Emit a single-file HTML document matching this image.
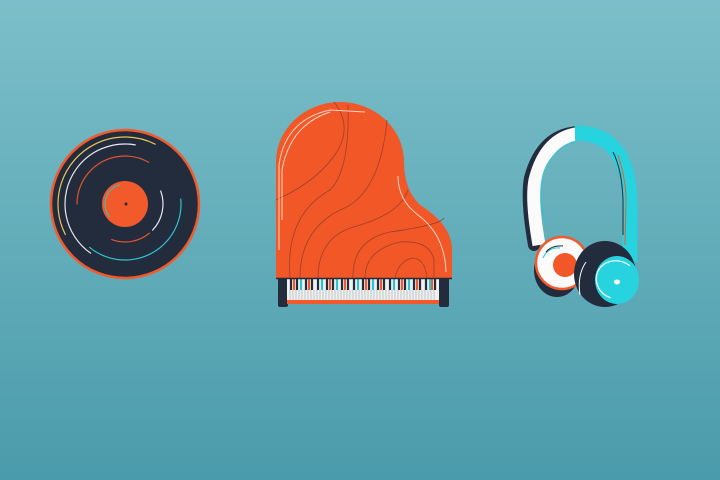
<!DOCTYPE html>
<html><head><style>
html,body{margin:0;padding:0;width:720px;height:480px;overflow:hidden}
body{background:linear-gradient(#7cbfc9,#4a9bab)}
</style></head><body>
<svg width="720" height="480" viewBox="0 0 720 480" xmlns="http://www.w3.org/2000/svg">
<!-- vinyl -->
<circle cx="125" cy="204" r="74" fill="#232c3d" stroke="#f25a2b" stroke-width="2.5"/>
<g fill="none" stroke-width="1.2" stroke-linecap="round">
<circle cx="125" cy="204" r="67" stroke="#e9c45a" stroke-dasharray="168 500" transform="rotate(153 125 204)"/>
<circle cx="125" cy="204" r="60" stroke="#e8e8ef" stroke-dasharray="162 500" transform="rotate(125 125 204)"/>
<circle cx="125" cy="204" r="48" stroke="#e0532c" stroke-dasharray="100 500" transform="rotate(180 125 204)"/>
<circle cx="125" cy="204" r="56" stroke="#2bc6d2" stroke-dasharray="131 500" transform="rotate(-5 125 204)"/>
<circle cx="125" cy="204" r="38" stroke="#e8e8ef" stroke-dasharray="42 500" transform="rotate(-20 125 204)"/>
<circle cx="125" cy="204" r="38" stroke="#e0532c" stroke-dasharray="40 500" transform="rotate(50 125 204)"/>
</g>
<circle cx="125" cy="204" r="23" fill="#f25a2b"/>
<circle cx="125" cy="204" r="20" fill="none" stroke="#2bc6d2" stroke-width="1" stroke-dasharray="40 200" transform="rotate(140 125 204)"/>
<circle cx="126" cy="204" r="1.5" fill="#232c3d"/>

<!-- piano -->
<rect x="278" y="278" width="10" height="29" rx="2" fill="#232c3d"/>
<rect x="439" y="278" width="10" height="29" rx="2" fill="#232c3d"/>
<rect x="287" y="278" width="152" height="26" fill="#f0f0f0"/>
<rect x="287" y="300" width="152" height="4" fill="#f25a2b"/>
<g stroke="#9aa" stroke-width="0.6">
<path d="M290 290V300M293 290V300M296 290V300M299 290V300M302 290V300M305 290V300M308 290V300M311 290V300M314 290V300M317 290V300M320 290V300M323 290V300M326 290V300M329 290V300M332 290V300M335 290V300M338 290V300M341 290V300M344 290V300M347 290V300M350 290V300M353 290V300M356 290V300M359 290V300M362 290V300M365 290V300M368 290V300M371 290V300M374 290V300M377 290V300M380 290V300M383 290V300M386 290V300M389 290V300M392 290V300M395 290V300M398 290V300M401 290V300M404 290V300M407 290V300M410 290V300M413 290V300M416 290V300M419 290V300M422 290V300M425 290V300M428 290V300M431 290V300M434 290V300"/>
</g>
<g stroke-width="2.2">
<path d="M291 279V290M297 279V290M306 279V290M312 279V290M318 279V290M327 279V290M333 279V290M342 279V290M348 279V290M354 279V290M363 279V290M369 279V290M378 279V290M384 279V290M390 279V290M399 279V290M405 279V290M414 279V290M420 279V290M426 279V290M435 279V290" stroke="#232c3d"/>
<path d="M294 279V290M309 279V290M330 279V290M345 279V290M366 279V290M381 279V290M402 279V290M417 279V290M432 279V290" stroke="#f25a2b"/>
<path d="M301 279V290M322 279V290M337 279V290M358 279V290M373 279V290M394 279V290M409 279V290M430 279V290" stroke="#2bc6d2"/>
</g>
<path d="M276 278 V162 A64 60 0 0 1 404 162 Q404 190 420 205 Q452 225 452 250 V278 Z" fill="#f25727"/>
<line x1="276" y1="278.5" x2="452" y2="278.5" stroke="#232c3d" stroke-width="1.5"/>
<g fill="none" stroke="#8a3a2a" stroke-width="0.8" opacity="0.8">
<path d="M276 200 Q320 180 338 150 Q352 125 334 102"/>
<path d="M290 278 Q285 215 330 190 Q350 170 348 105"/>
<path d="M300 278 Q300 230 340 210 Q380 195 387 120"/>
<path d="M318 278 Q318 240 350 228 Q400 215 408 190"/>
<path d="M353 278 Q352 240 390 232 Q440 225 444 218"/>
<path d="M365 278 Q365 250 400 242 Q430 240 434 260 L434 278"/>
<path d="M395 278 Q398 262 412 258 Q425 258 427 278"/>
</g>
<g fill="none" stroke="#ffd4c4" stroke-width="1">
<path d="M279 250 V165 Q285 120 330 110 L365 112"/>
<path d="M282 220 V170 Q290 125 330 112"/>
<path d="M398 176 Q398 200 418 215 Q445 235 446 272"/>
</g>

<!-- headphones -->
<path d="M534 245 Q526 200 530 178 Q542 133 580 132" fill="none" stroke="#232c3d" stroke-width="12" stroke-linecap="round"/>
<path d="M539 245 Q531 200 535 180 Q546 136 582 133" fill="none" stroke="#fbfbfb" stroke-width="13"/>
<path d="M575 133 Q628 133 630 200 L630 262" fill="none" stroke="#26d3de" stroke-width="15"/>
<path d="M545 223 Q535 180 550 160 Q560 146 575 142" fill="none" stroke="#2bc6d2" stroke-width="1"/>
<path d="M613 152 Q622 170 623 200 L623 235" fill="none" stroke="#232c3d" stroke-width="1"/>
<path d="M618 155 Q626 180 626 200 L625 245" fill="none" stroke="#f25a2b" stroke-width="1"/>
<ellipse cx="557" cy="270" rx="23" ry="27" fill="#232c3d"/>
<ellipse cx="562" cy="263" rx="26" ry="26" fill="#fbfbfb" stroke="#f25a2b" stroke-width="2.5"/>
<circle cx="565" cy="265" r="12" fill="#f25727"/>
<path d="M543 258 Q548 247 560 248" fill="none" stroke="#2bc6d2" stroke-width="1"/>
<path d="M546 252 Q552 245 563 246" fill="none" stroke="#232c3d" stroke-width="1"/>
<ellipse cx="605" cy="274" rx="31" ry="33" fill="#232c3d"/>
<ellipse cx="617" cy="280" rx="22" ry="24" fill="#26d3de"/>
<ellipse cx="617" cy="280" rx="19" ry="21" fill="none" stroke="#fff" stroke-width="1.2" stroke-dasharray="70 60" transform="rotate(110 617 280)"/>
<ellipse cx="617" cy="282" rx="3" ry="2.5" fill="#fff"/>
<path d="M580 295 Q577 275 586 262" fill="none" stroke="#fff" stroke-width="1"/>
</svg>
</body></html>
